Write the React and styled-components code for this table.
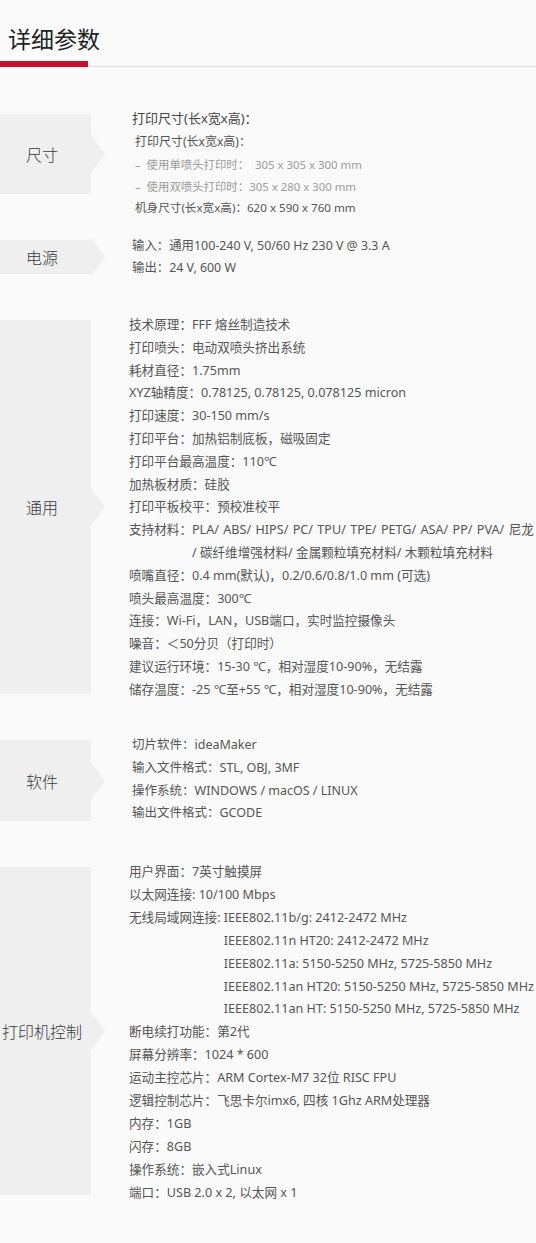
import React from "react";
import styled, { createGlobalStyle } from "styled-components";

const GlobalStyle = createGlobalStyle`
  html, body {
    margin: 0;
    padding: 0;
    background: #fafafa;
    overflow-x: hidden;
  }
  body {
    font-family: "Noto Sans", "Noto Sans CJK SC", sans-serif;
  }
`;

const Page = styled.div`
  width: 536px;
  min-height: 1243px;
  background: #fafafa;
  overflow: hidden;
`;

const Title = styled.h1`
  margin: 0;
  padding: 23px 0 0 8px;
  font-family: "Noto Sans CJK SC", sans-serif;
  font-size: 23px;
  line-height: 30px;
  font-weight: 400;
  color: #222;
`;

const Rule = styled.div`
  display: flex;
  align-items: flex-end;
  margin-top: 8px;
`;

const RedBar = styled.div`
  width: 88px;
  height: 6px;
  background: #c8102e;
`;

const GrayLine = styled.div`
  flex: 1;
  height: 1px;
  background: #dcdcdc;
`;

const Sections = styled.div`
  display: flex;
  flex-direction: column;
  gap: 46px;
  padding-top: 47px;
`;

const Section = styled.section`
  display: flex;
  align-items: flex-start;
  height: ${(p) => p.$h}px;
`;

const Label = styled.div`
  position: relative;
  flex: none;
  width: 91px;
  height: 100%;
  background: #efefef;
  display: flex;
  align-items: center;
  justify-content: center;
  padding-right: 7px;
  box-sizing: border-box;
  font-family: "Noto Sans CJK SC", sans-serif;
  font-size: 16px;
  font-weight: 300;
  color: #3a3a3a;
  white-space: nowrap;

  &::after {
    content: "";
    position: absolute;
    left: 100%;
    top: 50%;
    transform: translateY(-50%);
    border-top: 19px solid transparent;
    border-bottom: 19px solid transparent;
    border-left: 14px solid #efefef;
  }
`;

const Body = styled.div`
  margin-left: ${(p) => p.$indent}px;
  margin-top: ${(p) => p.$top}px;
  display: flex;
  flex-direction: column;
`;

const Line = styled.div`
  display: flex;
  white-space: pre;
  font-size: ${(p) => p.$size || 12.6}px;
  line-height: ${(p) => p.$lh || 22.8}px;
  color: ${(p) => p.$color || "#555"};
  padding-left: ${(p) => p.$pad || 0}px;
`;

const Key = styled.span`
  flex: none;
`;

const Value = styled.span`
  display: flex;
  flex-direction: column;
`;

const Part = styled.span`
  word-spacing: ${(p) => p.$ws || 0}px;
`;

const sections = [
  {
    label: "尺寸",
    h: 80,
    top: -8,
    indent: 41,
    lines: [
      { text: "打印尺寸(长x宽x高)：", color: "#444", lh: 24, size: 13 },
      { text: "打印尺寸(长x宽x高)：", size: 12, pad: 3, color: "#555", lh: 24 },
      { text: "–  使用单喷头打印时：  305 x 305 x 300 mm", size: 11.4, pad: 3, color: "#9a9a9a", lh: 21.5 },
      { text: "–  使用双喷头打印时：305 x 280 x 300 mm", size: 11.4, pad: 3, color: "#9a9a9a", lh: 21.5 },
      { text: "机身尺寸(长x宽x高)：620 x 590 x 760 mm", size: 11.6, pad: 3, color: "#555", lh: 21.5 },
    ],
  },
  {
    label: "电源",
    h: 34,
    top: -5,
    indent: 41,
    lh: 22,
    size: 12.4,
    lines: [
      { key: "输入：", value: ["通用100-240 V, 50/60 Hz 230 V @ 3.3 A"] },
      { key: "输出：", value: ["24 V, 600 W"] },
    ],
  },
  {
    label: "通用",
    h: 374,
    top: -6,
    indent: 38,
    lines: [
      { key: "技术原理：", value: ["FFF 熔丝制造技术"] },
      { key: "打印喷头：", value: ["电动双喷头挤出系统"] },
      { key: "耗材直径：", value: ["1.75mm"] },
      { key: "XYZ轴精度：", value: ["0.78125, 0.78125, 0.078125 micron"] },
      { key: "打印速度：", value: ["30-150 mm/s"] },
      { key: "打印平台：", value: ["加热铝制底板，磁吸固定"] },
      { key: "打印平台最高温度：", value: ["110℃"] },
      { key: "加热板材质：", value: ["硅胶"] },
      { key: "打印平板校平：", value: ["预校准校平"] },
      {
        key: "支持材料：",
        ws: [1.1, 0],
        value: [
          "PLA/ ABS/ HIPS/ PC/ TPU/ TPE/ PETG/ ASA/ PP/ PVA/ 尼龙",
          "/ 碳纤维增强材料/ 金属颗粒填充材料/ 木颗粒填充材料",
        ],
      },
      { key: "喷嘴直径：", value: ["0.4 mm(默认)，0.2/0.6/0.8/1.0 mm (可选)"] },
      { key: "喷头最高温度：", value: ["300℃"] },
      { key: "连接：", value: ["Wi-Fi，LAN，USB端口，实时监控摄像头"] },
      { key: "噪音：", value: ["＜50分贝（打印时）"] },
      { key: "建议运行环境：", value: ["15-30 ℃，相对湿度10-90%，无结露"] },
      { key: "储存温度：", value: ["-25 ℃至+55 ℃，相对湿度10-90%，无结露"] },
    ],
  },
  {
    label: "软件",
    h: 81,
    top: -6,
    indent: 41,
    size: 12.5,
    lines: [
      { key: "切片软件：", value: ["ideaMaker"] },
      { key: "输入文件格式：", value: ["STL, OBJ, 3MF"] },
      { key: "操作系统：", value: ["WINDOWS / macOS / LINUX"] },
      { key: "输出文件格式：", value: ["GCODE"] },
    ],
  },
  {
    label: "打印机控制",
    h: 328,
    top: -6,
    indent: 38,
    lh: 22.9,
    lines: [
      { key: "用户界面：", value: ["7英寸触摸屏"] },
      { key: "以太网连接: ", value: ["10/100 Mbps"] },
      {
        key: "无线局域网连接: ",
        value: [
          "IEEE802.11b/g: 2412-2472 MHz",
          "IEEE802.11n HT20: 2412-2472 MHz",
          "IEEE802.11a: 5150-5250 MHz, 5725-5850 MHz",
          "IEEE802.11an HT20: 5150-5250 MHz, 5725-5850 MHz",
          "IEEE802.11an HT: 5150-5250 MHz, 5725-5850 MHz",
        ],
      },
      { key: "断电续打功能：", value: ["第2代"] },
      { key: "屏幕分辨率：", value: ["1024 * 600"] },
      { key: "运动主控芯片：", value: ["ARM Cortex-M7 32位 RISC FPU"] },
      { key: "逻辑控制芯片：", value: ["飞思卡尔imx6, 四核 1Ghz ARM处理器"] },
      { key: "内存：", value: ["1GB"] },
      { key: "闪存：", value: ["8GB"] },
      { key: "操作系统：", value: ["嵌入式Linux"] },
      { key: "端口：", value: ["USB 2.0 x 2, 以太网 x 1"] },
    ],
  },
];

function SpecLine({ line, lh, size }) {
  if (line.text) {
    return (
      <Line $size={line.size} $color={line.color} $lh={line.lh} $pad={line.pad}>
        {line.text}
      </Line>
    );
  }
  return (
    <Line $lh={lh} $size={size}>
      <Key>{line.key}</Key>
      <Value>
        {line.value.map((v, i) => (
          <Part key={i} $ws={line.ws ? line.ws[i] : 0}>
            {v}
          </Part>
        ))}
      </Value>
    </Line>
  );
}

export default function App() {
  return (
    <Page>
      <GlobalStyle />
      <Title>详细参数</Title>
      <Rule>
        <RedBar />
        <GrayLine />
      </Rule>
      <Sections>
        {sections.map((s) => (
          <Section key={s.label} $h={s.h}>
            <Label>{s.label}</Label>
            <Body $indent={s.indent} $top={s.top}>
              {s.lines.map((l, i) => (
                <SpecLine key={i} line={l} lh={s.lh} size={s.size} />
              ))}
            </Body>
          </Section>
        ))}
      </Sections>
    </Page>
  );
}
